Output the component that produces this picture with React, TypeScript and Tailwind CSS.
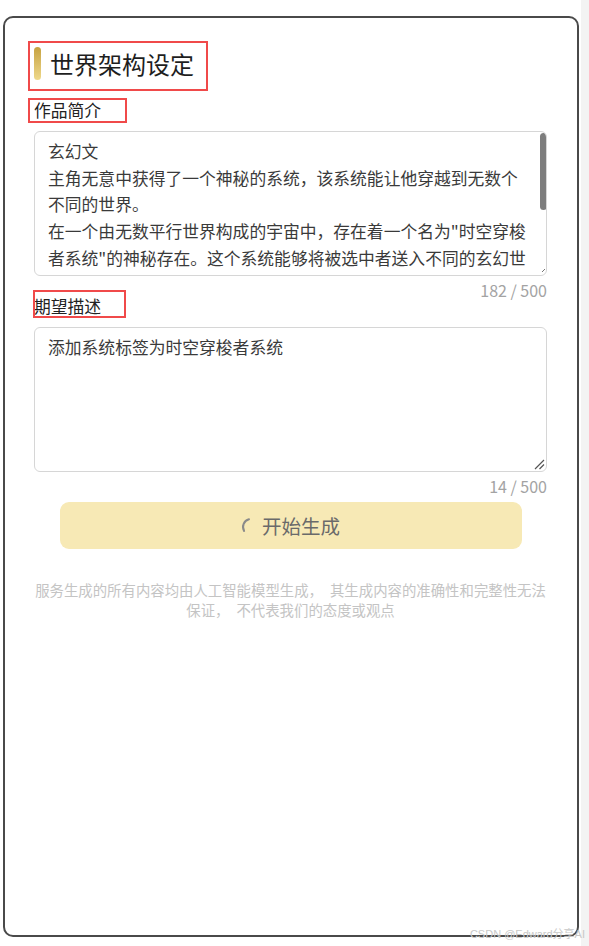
import React from "react";

const lines1 = [
  "玄幻文",
  "主角无意中获得了一个神秘的系统，该系统能让他穿越到无数个",
  "不同的世界。",
  "在一个由无数平行世界构成的宇宙中，存在着一个名为\"时空穿梭",
  "者系统\"的神秘存在。这个系统能够将被选中者送入不同的玄幻世",
  "界，让他们在其中历练成长，获取力量与宝物。",
];

export default function App() {
  return (
    <div className="relative w-[589px] h-[946px] bg-white flex font-['Noto_Sans_CJK_SC','Noto_Sans',sans-serif] overflow-hidden">
      <div className="w-[581px] shrink-0">
        <div className="ml-[3px] mt-[16px] w-[576px] h-[921px] border-2 border-[#4a4a4a] rounded-[10px] pl-[29px] pr-[30px] pt-[29px]">
          {/* Title */}
          <div className="relative flex items-center h-[33px] gap-[9px]">
            <div className="w-[7px] h-[33px] rounded-full bg-gradient-to-b from-[#c6a23f] to-[#efd98a]" />
            <div className="text-[24px] leading-[32px] text-[#1e1e1e]">世界架构设定</div>
            <div className="absolute left-[-6px] top-[-6px] w-[180px] h-[50px] border-2 border-[#f04a4a]" />
          </div>

          {/* Label 1 */}
          <div className="relative mt-[21px] text-[16.8px] leading-[18px] text-[#222] w-fit">
            作品简介
            <div className="absolute left-[-6px] top-[-3px] w-[99px] h-[25px] border-2 border-[#f04a4a]" />
          </div>

          {/* Textarea 1 */}
          <div className="relative mt-[12px] h-[145px] border border-[#d6d6d6] rounded-[6px] overflow-hidden pl-[13px] pt-[6px] text-[16.8px] leading-[26.7px] text-[#3a3a3a] whitespace-pre">
            {lines1.map((l, i) => (
              <div key={i}>{l}</div>
            ))}
            <div className="absolute left-[505px] top-[1px] w-[7px] h-[77px] rounded-full bg-[#7d7d7d]" />
            <svg className="absolute right-[1px] bottom-[3px]" width="3" height="3" viewBox="0 0 3 3">
              <path d="M3 0 L0 3" stroke="#777" strokeWidth="1" />
            </svg>
          </div>

          {/* Counter 1 */}
          <div className="mt-[7px] text-right text-[16px] leading-[14px] text-[#a3a3a3]">182 / 500</div>

          {/* Label 2 */}
          <div className="relative mt-0 text-[16.8px] leading-[18px] text-[#222] w-fit">
            期望描述
            <div className="absolute left-[-1px] top-[-7px] w-[93px] h-[28px] border-2 border-[#f04a4a]" />
          </div>

          {/* Textarea 2 */}
          <div className="relative mt-[12px] h-[145px] border border-[#d6d6d6] rounded-[6px] pl-[13px] pt-[6px] text-[16.8px] leading-[26.7px] text-[#3a3a3a]">
            添加系统标签为时空穿梭者系统
            <svg className="absolute right-[1px] bottom-[1px]" width="11" height="11" viewBox="0 0 11 11">
              <path d="M10 1 L1 10 M10 5.5 L5.5 10" stroke="#555" strokeWidth="1.2" />
            </svg>
          </div>

          {/* Counter 2 */}
          <div className="mt-[7px] text-right text-[16px] leading-[14px] text-[#a3a3a3]">14 / 500</div>

          {/* Button */}
          <div className="mt-[9px] mx-auto w-[462px] h-[47px] rounded-[9px] bg-[#f7e9b5] flex items-center justify-center gap-[1px]">
            <svg className="mt-[3px]" width="20" height="20" viewBox="0 0 20 20">
              <path d="M3.1 14 A8 8 0 0 1 8 2.3" fill="none" stroke="#8a8a8a" strokeWidth="2" strokeLinecap="round" />
            </svg>
            <span className="text-[19.5px] leading-[24px] text-[#6a6a6a]">开始生成</span>
          </div>

          {/* Disclaimer */}
          <div className="mt-[31px] text-center text-[14.4px] leading-[20px] text-[#c4c4c4]">
            <div className="whitespace-nowrap">
              服务生成的所有内容均由人工智能模型生成，<span className="inline-block w-[7px]" />其生成内容的准确性和完整性无法
            </div>
            <div className="whitespace-nowrap">
              保证，<span className="inline-block w-[7px]" />不代表我们的态度或观点
            </div>
          </div>
        </div>
      </div>
      <div className="w-[8px] shrink-0 bg-[#f3f3f3]" />

      {/* Watermark */}
      <div className="absolute right-[4px] bottom-[5px] text-[11px] leading-[13px] text-[#c8c8c8] font-['Liberation_Sans','Noto_Sans_CJK_SC',sans-serif]">
        CSDN @Edward分享AI
      </div>
    </div>
  );
}
